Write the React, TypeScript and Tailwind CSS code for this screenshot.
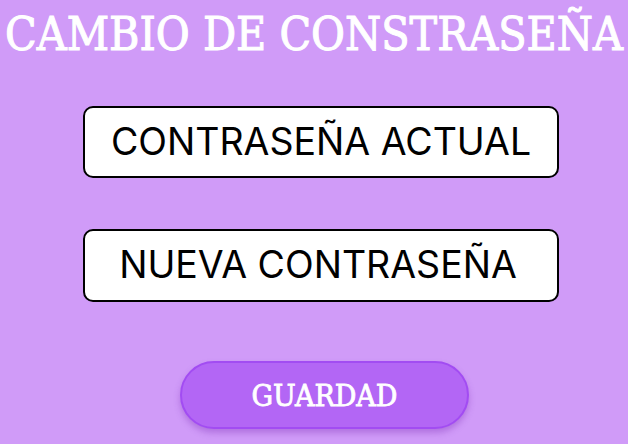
import React from "react";

export default function App() {
  return (
    <div className="w-[628px] h-[444px] bg-[#d09bf8] flex flex-col items-center overflow-hidden">
      <h1 className="mt-[10px] text-white text-[46px] leading-[48px] font-normal font-stretch-condensed font-['DejaVu_Serif',serif] [-webkit-text-stroke:1px_white] whitespace-nowrap">
        CAMBIO DE CONSTRASEÑA
      </h1>
      <div className="mt-[48px] ml-[14px] w-[476px] h-[72px] bg-white border-2 border-black rounded-[10px] flex items-center justify-center">
        <span className="text-[37.5px] text-black font-['Inter',sans-serif]">CONTRASEÑA ACTUAL</span>
      </div>
      <div className="mt-[51px] ml-[14px] w-[476px] h-[73px] bg-white border-2 border-black rounded-[10px] flex items-center justify-center">
        <span className="text-[37.5px] text-black font-['Inter',sans-serif] pr-[6px]">NUEVA CONTRASEÑA</span>
      </div>
      <button className="mt-[59px] ml-[21px] w-[289px] h-[68px] rounded-full bg-[#b366f5] border-2 border-[#a24cf2] shadow-[0_4px_6px_rgba(120,40,180,0.35)] flex items-center justify-center text-white text-[30px] font-normal font-stretch-condensed font-['DejaVu_Serif',serif] [-webkit-text-stroke:0.8px_white]">
        GUARDAD
      </button>
    </div>
  );
}
